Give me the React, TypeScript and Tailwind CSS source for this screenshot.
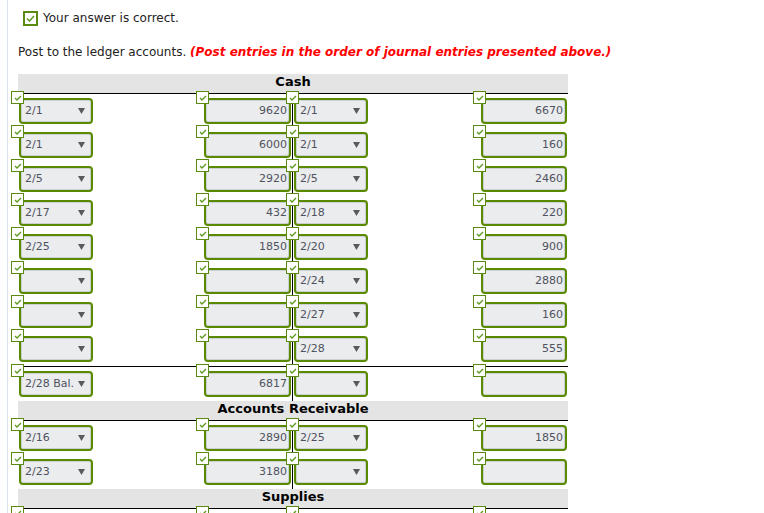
import React from 'react'

type Row = [string, string, string, string]

const cashRows: Row[] = [
  ['2/1', '9620', '2/1', '6670'],
  ['2/1', '6000', '2/1', '160'],
  ['2/5', '2920', '2/5', '2460'],
  ['2/17', '432', '2/18', '220'],
  ['2/25', '1850', '2/20', '900'],
  ['', '', '2/24', '2880'],
  ['', '', '2/27', '160'],
  ['', '', '2/28', '555'],
]

const arRows: Row[] = [
  ['2/16', '2890', '2/25', '1850'],
  ['2/23', '3180', '', ''],
]

function Tick() {
  return (
    <span className="absolute left-[-8px] top-[-7px] z-10 flex h-[13px] w-[13px] items-center justify-center border border-[#5b8a12] bg-white">
      <svg width="8" height="6" viewBox="0 0 8 6">
        <polyline points="1,3 3,5 7,1" fill="none" stroke="#5b9a1a" strokeWidth="1.3" />
      </svg>
    </span>
  )
}

function DateSelect({ value }: { value: string }) {
  return (
    <div className="relative w-[74px]">
      <Tick />
      <div className="flex h-[26px] items-center rounded-[4px] border-2 border-[#5a8a00] bg-[#ebecee] pl-[4px] pr-[6px] text-[11px] text-[#4f5360] shadow-[inset_0_0_0_1px_#cdd0d3]">
        <span className="flex-1 whitespace-nowrap">{value}</span>
        <svg width="7" height="6" viewBox="0 0 7 6" className="shrink-0">
          <polygon points="0,0 7,0 3.5,6" fill="#5a5a5a" />
        </svg>
      </div>
    </div>
  )
}

function Amount({ value, w }: { value: string; w: string }) {
  return (
    <div className={`relative ${w}`}>
      <Tick />
      <div className="flex h-[26px] items-center justify-end rounded-[4px] border-2 border-[#5a8a00] bg-[#ebecee] pr-[2px] text-[11px] text-[#4f5360] shadow-[inset_0_0_0_1px_#cdd0d3]">
        {value}
      </div>
    </div>
  )
}

function LedgerRow({ row }: { row: Row }) {
  return (
    <div className="flex h-[34px]">
      <div className="flex w-[274px] items-start justify-between pl-[1px] pr-px pt-[4px]">
        <DateSelect value={row[0]} />
        <Amount value={row[1]} w="w-[87px]" />
      </div>
      <div className="w-px bg-black" />
      <div className="flex flex-1 items-start justify-between pl-[1px] pr-px pt-[4px]">
        <DateSelect value={row[2]} />
        <Amount value={row[3]} w="w-[86px]" />
      </div>
    </div>
  )
}

function Header({ title }: { title: string }) {
  return (
    <div className="h-[20px] border-b border-black bg-[#e4e4e4] text-center text-[13px] font-bold leading-[16px] text-black">
      {title}
    </div>
  )
}

export default function App() {
  return (
    <div className="min-h-screen bg-white pl-[7px]" style={{ fontFamily: '"DejaVu Sans", Verdana, sans-serif' }}>
      <div className="min-h-[513px] border-l border-[#dde3ea] pl-[10px] pt-[11px]">
        <div className="ml-[5px] flex items-center gap-[5px]">
          <span className="flex h-[15px] w-[15px] items-center justify-center border-2 border-[#5b8a12] bg-white">
            <svg width="9" height="7" viewBox="0 0 9 7">
              <polyline points="1,3.5 3.5,6 8,1" fill="none" stroke="#5b9a1a" strokeWidth="1.5" />
            </svg>
          </span>
          <span className="text-[12px] leading-[15px] text-[#222]">Your answer is correct.</span>
        </div>

        <p className="mt-[18px] text-[12px] leading-[16px] text-[#222]">
          Post to the ledger accounts.{' '}
          <span className="font-bold italic text-[#f00]">
            (Post entries in the order of journal entries presented above.)
          </span>
        </p>

        <div className="mt-[14px] w-[550px]">
          <Header title="Cash" />
          {cashRows.map((r, i) => (
            <LedgerRow key={i} row={r} />
          ))}
          <div className="h-px bg-black" />
          <LedgerRow row={['2/28 Bal.', '6817', '', '']} />

          <Header title="Accounts Receivable" />
          {arRows.map((r, i) => (
            <LedgerRow key={i} row={r} />
          ))}

          <Header title="Supplies" />
          <LedgerRow row={['', '', '', '']} />
        </div>
      </div>
    </div>
  )
}
